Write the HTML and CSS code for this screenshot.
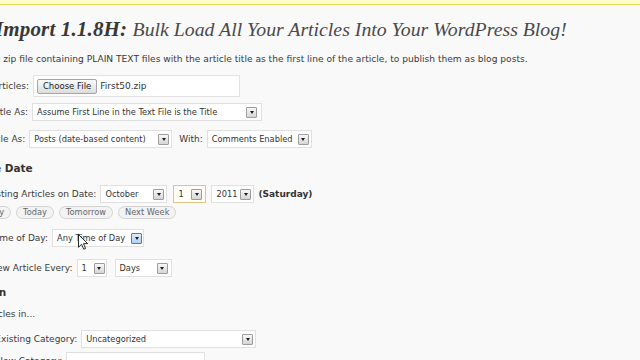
FILE: index.html
```
<!DOCTYPE html>
<html>
<head>
<meta charset="utf-8">
<link rel="stylesheet" href="styles.css">
</head>
<body>
<div class="notice"></div>
<div class="wrap">
  <h2 class="title"><strong>Easy Import 1.1.8H: </strong>Bulk Load All Your Articles Into Your WordPress Blog!</h2>
  <p class="desc">Choose one zip file containing PLAIN TEXT files with the article title as the first line of the article, to publish them as blog posts.</p>

  <div class="row r-file">
    <span class="label">Zip file of Articles:</span>
    <div class="filebox"><span class="btn-file">Choose File</span><span class="filename">First50.zip</span></div>
  </div>

  <div class="row r-title">
    <span class="label">Read The Title As:</span>
    <div class="select w-title"><span class="val">Assume First Line in the Text File is the Title</span><span class="arrow"></span></div>
  </div>

  <div class="row r-type">
    <span class="label">Import Article As:</span>
    <div class="select w-posts"><span class="val">Posts (date-based content)</span><span class="arrow"></span></div>
    <span class="label with">With:</span>
    <div class="select w-comments"><span class="val">Comments Enabled</span><span class="arrow"></span></div>
  </div>

  <h3 class="heading h-date">Schedule Date</h3>

  <div class="row r-date">
    <span class="label">Start by Posting Articles on Date:</span>
    <div class="select w-month"><span class="val">October</span><span class="arrow"></span></div>
    <div class="select focus w-day"><span class="val">1</span><span class="arrow"></span></div>
    <div class="select w-year"><span class="val">2011</span><span class="arrow"></span></div>
    <span class="label weekday">(Saturday)</span>
  </div>

  <div class="pills">
    <span class="pill">Yesterday</span>
    <span class="pill">Today</span>
    <span class="pill">Tomorrow</span>
    <span class="pill">Next Week</span>
  </div>

  <div class="row r-time">
    <span class="label">Choose a Time of Day:</span>
    <div class="select w-time"><span class="val">Any Time of Day</span><span class="arrow hover"></span></div>
  </div>

  <div class="row r-every">
    <span class="label">Publish a New Article Every:</span>
    <div class="select w-num"><span class="val">1</span><span class="arrow"></span></div>
    <div class="select w-unit"><span class="val">Days</span><span class="arrow"></span></div>
  </div>

  <h3 class="heading h-cat">Allocation</h3>
  <p class="intro">Publish Articles in...</p>

  <div class="row r-cat">
    <span class="label">Select the Existing Category:</span>
    <div class="select w-cat"><span class="val">Uncategorized</span><span class="arrow"></span></div>
  </div>

  <div class="row r-new">
    <span class="label">Or, Create New Category:</span>
    <div class="textbox"></div>
  </div>
</div>

<svg class="cursor" width="10" height="16" viewBox="0 0 12 19" aria-hidden="true">
  <path d="M0.6 0.6 L0.6 15.8 L4.3 12.3 L6.9 18.2 L9.1 17.2 L6.6 11.5 L11.6 11.5 Z" fill="#fff" stroke="#000" stroke-width="1" stroke-linejoin="round"/>
</svg>
</body>
</html>
```

FILE: styles.css
```
* { box-sizing: border-box; }

html, body {
  margin: 0;
  padding: 0;
}

body {
  width: 640px;
  height: 360px;
  overflow: hidden;
  background: #f9f9f9;
  font-family: "DejaVu Sans", Verdana, sans-serif;
  font-size: 9px;
  color: #3a3a3a;
}

.notice {
  height: 5px;
  background: #fffbcc;
  border-bottom: 1px solid #e6db55;
}

.wrap {
  margin-left: -53px;
  white-space: nowrap;
}

.title {
  margin: 12px 0 0;
  height: 24px;
  line-height: 24px;
  font-family: "Liberation Serif", "Times New Roman", serif;
  font-style: italic;
  font-weight: normal;
  font-size: 19.8px;
  color: #4a4a4a;
}

.title strong {
  font-size: 21px;
  letter-spacing: 0.15px;
  font-weight: bold;
  color: #383838;
}

.desc {
  margin: 12px 0 0;
  line-height: 12px;
  font-size: 9.1px;
}

.row {
  display: flex;
  align-items: center;
  gap: 4px;
}

.label {
  line-height: 12px;
}

.r-file  { margin-top: 10px; height: 22px; }
.r-title { margin-top: 6px;  height: 18px; }
.r-type  { margin-top: 9px;  height: 18px; }
.r-date  { margin-top: 10px; height: 18px; }
.r-time  { margin-top: 10px; height: 18px; }
.r-every { margin-top: 12px; height: 18px; }
.r-cat   { margin-top: 10px; height: 18px; }
.r-new   { margin-top: 4px;  height: 18px; }

.heading {
  margin: 0;
  font-size: 10.5px;
  font-weight: bold;
  line-height: 14px;
  color: #333;
}

.h-date { margin-top: 13px; }
.h-cat  { margin-top: 8px; }

.intro {
  margin: 9px 0 0;
  line-height: 12px;
}

/* file input */
.filebox {
  display: flex;
  align-items: center;
  gap: 3px;
  width: 207px;
  height: 22px;
  padding: 0 3px;
  background: #fff;
  border: 1px solid #e2e2e2;
}

.btn-file {
  height: 15px;
  line-height: 13px;
  padding: 0 5px;
  border: 1px solid #a5a5a5;
  border-radius: 2px;
  background: linear-gradient(#fbfbfb, #dcdcdc);
  font-size: 8.5px;
  color: #222;
}

.filename {
  font-size: 9px;
  color: #333;
}

/* select boxes */
.select {
  display: flex;
  align-items: center;
  justify-content: space-between;
  height: 18px;
  padding: 0 2px 0 4px;
  background: #fff;
  border: 1px solid #e0e0e0;
  font-size: 8.25px;
  color: #333;
}

.select.focus {
  border-color: #e2c67f;
  background: #fffdf6;
}

.arrow {
  display: flex;
  align-items: center;
  justify-content: center;
  flex: none;
  width: 11px;
  height: 11px;
  border: 1px solid #9c9c9c;
  border-radius: 1px;
  background: linear-gradient(#f7f7f7, #d6d6d6);
}

.arrow::after {
  content: "";
  border-left: 2.5px solid transparent;
  border-right: 2.5px solid transparent;
  border-top: 3px solid #1e1e1e;
}

.arrow.hover {
  border-color: #3f7fcf;
  background: linear-gradient(#dcebfb, #b3cff0);
}

.w-title    { width: 230px; padding-right: 4px; }
.w-posts    { width: 143px; }
.w-comments { width: 105px; }
.w-month    { width: 67px; }
.w-day      { width: 33px; margin-left: 2px; padding-right: 3px; }
.w-year     { width: 43px; margin-left: 1px; }
.w-time     { width: 92px; padding-right: 1px; }
.w-num      { width: 30px; padding-right: 1px; }
.w-unit     { width: 57px; margin-left: 4px; padding-right: 3px; }
.w-cat      { width: 175px; }

.with { margin-left: 3px; }

.weekday {
  font-weight: bold;
  color: #333;
}

/* quick date buttons */
.pills {
  display: flex;
  gap: 5px;
  margin-top: 3px;
  padding-left: 10px;
  height: 13px;
}

.pill {
  height: 13px;
  line-height: 11px;
  padding: 0 6px;
  border: 1px solid #d3d3d3;
  border-radius: 7px;
  background: #f3f3f3;
  font-size: 8.25px;
  color: #666;
}

.textbox {
  width: 139px;
  height: 18px;
  background: #fff;
  border: 1px solid #e0e0e0;
}

.cursor {
  position: absolute;
  left: 78px;
  top: 234px;
}
```
